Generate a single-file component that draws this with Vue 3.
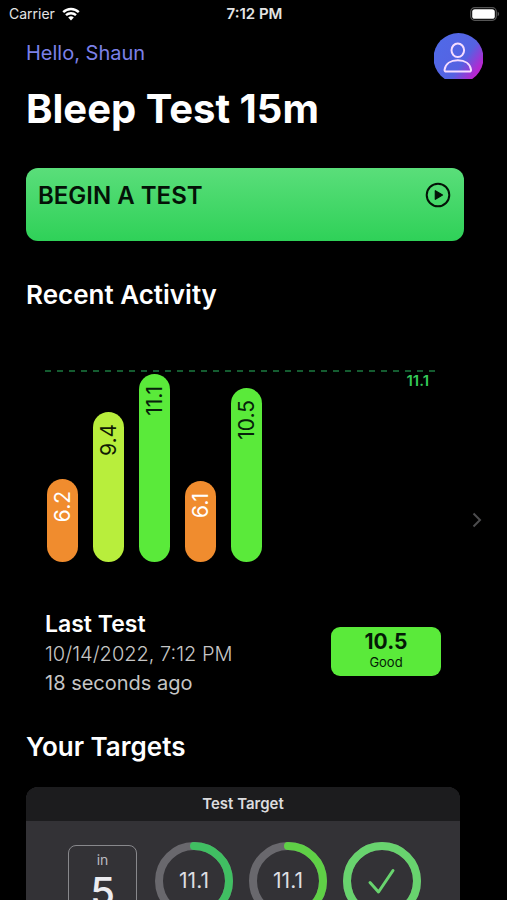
<template>
  <div class="screen">
    <div class="status-bar">
      <div class="carrier">
        <span>Carrier</span>
        <svg class="wifi" viewBox="0 0 18 14" aria-hidden="true">
          <path d="M1.2 5.2a11.2 11.2 0 0 1 15.6 0" />
          <path d="M4 8.2a7.2 7.2 0 0 1 10 0" />
          <path class="solid" d="M9 13.4 6.2 10.6a4 4 0 0 1 5.6 0z" />
        </svg>
      </div>
      <span class="clock">7:12 PM</span>
      <div class="battery-slot">
        <svg class="battery" viewBox="0 0 30 14" aria-hidden="true">
          <rect x="0.7" y="0.7" width="25.6" height="12.6" rx="4" fill="none" stroke="#555" stroke-width="1.2" />
          <rect x="2.2" y="2.2" width="22.6" height="9.6" rx="2.6" fill="#fff" />
          <path d="M27.6 4.8c2 .7 2 3.7 0 4.4z" fill="#555" />
        </svg>
      </div>
    </div>

    <header class="top">
      <div>
        <p class="greeting">Hello, {{ user }}</p>
        <h1 class="title">Bleep Test 15m</h1>
      </div>
      <button class="avatar" type="button" aria-label="Profile">
        <svg viewBox="0 0 49 46" aria-hidden="true">
          <ellipse cx="23.8" cy="17.3" rx="6.3" ry="6.8" />
          <path d="M12.4 38.6h22.8c1.4 0 2-.7 1.8-2-.9-5.7-6-9.3-13.2-9.3s-12.3 3.6-13.2 9.3c-.2 1.3.4 2 1.8 2z" />
        </svg>
      </button>
    </header>

    <main class="content">
      <button class="begin" type="button">
        <span>BEGIN A TEST</span>
        <svg viewBox="0 0 26 26" aria-hidden="true">
          <circle cx="13" cy="13" r="11.3" fill="none" stroke="currentColor" stroke-width="2" />
          <path d="M10.3 8.7v8.6l7.2-4.3z" fill="currentColor" stroke="currentColor" stroke-width="1.2" stroke-linejoin="round" />
        </svg>
      </button>

      <h2 class="heading">Recent Activity</h2>

      <section class="activity">
        <div class="activity-body">
          <div class="chart">
            <svg class="best-line" height="2" aria-hidden="true">
              <line x1="0" y1="1" x2="100%" y2="1" />
            </svg>
            <span class="best">11.1</span>
            <div
              v-for="(bar, i) in bars"
              :key="i"
              class="bar"
              :class="bar.level"
              :style="{ height: bar.height + 'px' }"
            >
              <span>{{ bar.score }}</span>
            </div>
          </div>

          <div class="last-test">
            <div>
              <h3 class="last-title">Last Test</h3>
              <p class="last-info date">10/14/2022, 7:12 PM</p>
              <p class="last-info">18 seconds ago</p>
            </div>
            <div class="score">
              <strong>10.5</strong>
              <span>Good</span>
            </div>
          </div>
        </div>

        <button class="more" type="button" aria-label="Show activity">
          <svg viewBox="0 0 10 16" aria-hidden="true">
            <path d="M1.5 1.5 8 8l-6.5 6.5" />
          </svg>
        </button>
      </section>

      <h2 class="heading">Your Targets</h2>

      <section class="target">
        <h3 class="target-title">Test Target</h3>
        <div class="target-body">
          <div class="due">
            <span class="due-label">in</span>
            <span class="due-value">5</span>
          </div>
          <div v-for="ring in rings" :key="ring.id" class="ring">
            <svg viewBox="0 0 80 80" aria-hidden="true">
              <circle class="track" cx="40" cy="40" r="35" />
              <circle
                class="progress"
                :class="ring.id"
                cx="40"
                cy="40"
                r="35"
                pathLength="100"
                :stroke-dasharray="ring.done ? 'none' : ring.percent + ' 100'"
                transform="rotate(-90 40 40)"
              />
              <path v-if="ring.done" class="tick" d="M28 41.5 36.500 51 51 29.5" />
            </svg>
            <span v-if="!ring.done" class="ring-value">{{ ring.value }}</span>
          </div>
        </div>
      </section>
    </main>
  </div>
</template>

<script setup>
const user = "Shaun";

const bars = [
  { score: "6.2", height: 83, level: "low" },
  { score: "9.4", height: 150, level: "mid" },
  { score: "11.1", height: 188, level: "high" },
  { score: "6.1", height: 81, level: "low" },
  { score: "10.5", height: 174, level: "high" }
];

const rings = [
  { id: "current", value: "11.1", percent: 50 },
  { id: "goal", value: "11.1", percent: 50 },
  { id: "complete", done: true }
];
</script>

<style>
body {
  background: #000;
}
</style>

<style scoped>
.screen {
  box-sizing: border-box;
  height: 100vh;
  overflow-y: auto;
  scrollbar-width: none;
  background: #000;
  color: #fff;
  font-family: Inter, "Liberation Sans", sans-serif;
}

h1,
h2,
h3,
p {
  margin: 0;
}

button {
  border: 0;
  padding: 0;
  font-family: inherit;
  cursor: pointer;
}

/* STATUS BAR */
.status-bar {
  display: grid;
  grid-template-columns: 1fr auto 1fr;
  align-items: center;
  height: 27px;
  padding: 0 7px 0 9px;
  font-size: 14px;
  color: #e4e4e4;
}

.carrier {
  display: flex;
  align-items: center;
  gap: 7px;
}

.wifi {
  width: 18px;
  height: 14px;
  fill: none;
  stroke: #fff;
  stroke-width: 2.4;
}

.wifi .solid {
  fill: #fff;
  stroke: none;
}

.clock {
  font-size: 15px;
  font-weight: 600;
}

.battery-slot {
  display: flex;
  justify-content: flex-end;
}

.battery {
  width: 30px;
  height: 14px;
}

/* HEADER */
.top {
  display: flex;
  justify-content: space-between;
  align-items: flex-start;
  padding: 6px 24px 0 26px;
}

.greeting {
  padding-top: 8px;
  font-size: 20px;
  line-height: 24px;
  color: #7c80e8;
}

.title {
  margin-top: 20px;
  font-size: 40px;
  line-height: 48px;
  font-weight: 700;
}

.avatar {
  width: 49px;
  height: 46px;
  background: linear-gradient(125deg, #4f6be8 0%, #5562e2 60%, #b428d0 85%, #c822cc 100%);
  clip-path: circle(25px at 50% 25px);
}

.avatar svg {
  display: block;
  width: 49px;
  height: 46px;
  fill: none;
  stroke: #f6dcff;
  stroke-width: 2;
}

/* CONTENT */
.content {
  padding: 35px 0 24px 26px;
}

.begin {
  display: flex;
  justify-content: space-between;
  align-items: flex-start;
  width: calc(100% - 43px);
  height: 73px;
  margin-bottom: 38px;
  padding: 14px 13px 0 12px;
  border-radius: 12px;
  background: linear-gradient(#5ade7a, #2fd158);
  color: #041207;
  font-size: 24px;
  line-height: 28px;
  font-weight: 600;
}

.begin svg {
  width: 26px;
  height: 26px;
}

.heading {
  font-size: 26px;
  line-height: 32px;
  font-weight: 600;
}

/* ACTIVITY */
.activity {
  display: flex;
  align-items: center;
  padding: 59px 24px 33px 19px;
}

.activity-body {
  flex: 1;
}

.chart {
  position: relative;
  display: flex;
  align-items: flex-end;
  gap: 15px;
  height: 192px;
  padding-left: 2px;
}

.best-line {
  position: absolute;
  top: 0;
  left: 0;
  width: 100%;
}

.best-line line {
  stroke: #145c30;
  stroke-width: 2;
  stroke-dasharray: 6 6;
}

.best {
  position: absolute;
  top: 3px;
  right: 12px;
  font-size: 15px;
  line-height: 16px;
  font-weight: 600;
  color: #34c759;
}

.bar {
  position: relative;
  display: flex;
  justify-content: center;
  box-sizing: border-box;
  width: 31px;
  padding-top: 12px;
  border-radius: 16px;
  font-size: 21px;
  line-height: 31px;
}

.bar span {
  align-self: flex-start;
  writing-mode: vertical-rl;
  transform: rotate(180deg);
}

.bar.low {
  background: #f08c2e;
  color: #fff;
}

.bar.mid {
  background: #b8ee3c;
  color: #101a04;
}

.bar.high {
  background: #5aea3a;
  color: #06200a;
}

.last-test {
  display: flex;
  justify-content: space-between;
  align-items: center;
  margin-top: 46px;
}

.last-title {
  font-size: 23px;
  line-height: 32px;
  font-weight: 600;
}

.last-info {
  font-size: 20px;
  line-height: 29px;
  color: #c6c6c6;
}

.last-info.date {
  font-weight: 300;
}

.score {
  display: flex;
  flex-direction: column;
  align-items: center;
  justify-content: center;
  width: 110px;
  height: 49px;
  margin-bottom: 4px;
  border-radius: 9px;
  background: #5aea3a;
  color: #041a06;
}

.score strong {
  font-size: 21px;
  line-height: 22px;
  font-weight: 700;
}

.score span {
  font-size: 13px;
  line-height: 18px;
}

.more {
  display: flex;
  justify-content: flex-end;
  width: 42px;
  padding: 0 1px 28px 0;
  background: none;
}

.more svg {
  width: 10px;
  height: 16px;
  fill: none;
  stroke: #4c4c4e;
  stroke-width: 2;
}

/* TARGETS */
.target {
  margin: 24px 47px 0 0;
  overflow: hidden;
  border-radius: 12px;
  background: #333236;
}

.target-title {
  background: #1c1c1e;
  color: #dcdcde;
  text-align: center;
  font-size: 15px;
  line-height: 34px;
  font-weight: 600;
}

.target-body {
  display: flex;
  justify-content: center;
  gap: 14px;
  padding: 20px 38px 20px 42px;
}

.due {
  display: flex;
  flex-direction: column;
  align-items: center;
  box-sizing: border-box;
  width: 70px;
  height: 74px;
  margin: 4px 3px 0 0;
  padding-top: 5px;
  border: 1px solid #88888c;
  border-radius: 8px;
}

.due-label {
  font-size: 14px;
  line-height: 18px;
  color: #bcbcc0;
}

.due-value {
  font-size: 40px;
  line-height: 46px;
  font-weight: 500;
  color: #ececf0;
}

.ring {
  position: relative;
  width: 80px;
  height: 80px;
}

.ring svg {
  display: block;
  width: 80px;
  height: 80px;
  fill: none;
}

.track {
  stroke: #69686d;
  stroke-width: 8;
}

.progress {
  stroke-width: 8;
  stroke-linecap: round;
}

.progress.current {
  stroke: #40bf62;
}

.progress.goal {
  stroke: #5fd046;
}

.progress.complete {
  stroke: #68d36e;
}

.tick {
  stroke: #68d36e;
  stroke-width: 3;
  stroke-linecap: round;
  stroke-linejoin: round;
}

.ring-value {
  position: absolute;
  inset: 0;
  text-align: center;
  font-size: 21px;
  line-height: 80px;
  color: #dedee2;
}
</style>
